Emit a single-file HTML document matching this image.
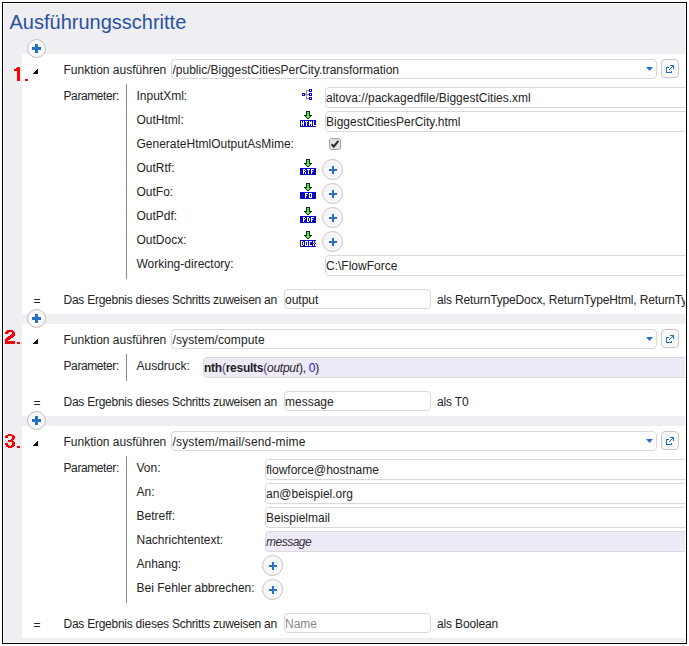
<!DOCTYPE html>
<html><head><meta charset="utf-8"><style>
html,body{margin:0;padding:0;width:689px;height:646px;overflow:hidden;background:#fff;font-family:'Liberation Sans', sans-serif;}
</style></head><body>
<div style="position:relative;width:689px;height:646px;overflow:hidden">
<div style="position:absolute;left:2px;top:2px;width:685px;height:642px;border:1px solid #000;box-sizing:border-box;background:#fff"></div>
<div style="position:absolute;left:4px;top:4px;width:681px;height:638px;background:#efeef3"></div>
<div style="position:absolute;left:0;top:0;width:685px;height:642px;overflow:hidden">
<div style="position:absolute;left:9.5px;top:11px;font-size:20px;line-height:22px;white-space:nowrap;color:#2852a0;letter-spacing:0px">Ausführungsschritte</div>
<div style="position:absolute;left:22px;top:54px;width:663px;height:260px;background:#fff"></div>
<div style="position:absolute;left:22px;top:324px;width:663px;height:92px;background:#fff"></div>
<div style="position:absolute;left:22px;top:426px;width:663px;height:212px;background:#fff"></div>
<svg style="position:absolute;left:27px;top:39px" width="19" height="19" viewBox="0 0 19 19"><circle cx="9.5" cy="9.5" r="9" fill="#f7f7f7" stroke="#c0c0c0" stroke-width="1"/><rect x="5" y="8" width="9" height="3" fill="#2470c3"/><rect x="8" y="5" width="3" height="9" fill="#2470c3"/></svg>
<svg style="position:absolute;left:27px;top:309px" width="19" height="19" viewBox="0 0 19 19"><circle cx="9.5" cy="9.5" r="9" fill="#f7f7f7" stroke="#c0c0c0" stroke-width="1"/><rect x="5" y="8" width="9" height="3" fill="#2470c3"/><rect x="8" y="5" width="3" height="9" fill="#2470c3"/></svg>
<svg style="position:absolute;left:27px;top:411px" width="19" height="19" viewBox="0 0 19 19"><circle cx="9.5" cy="9.5" r="9" fill="#f7f7f7" stroke="#c0c0c0" stroke-width="1"/><rect x="5" y="8" width="9" height="3" fill="#2470c3"/><rect x="8" y="5" width="3" height="9" fill="#2470c3"/></svg>
<svg style="position:absolute;left:33px;top:69px" width="5" height="5" shape-rendering="crispEdges"><rect x="4" y="0" width="1" height="1" fill="#151515"/><rect x="3" y="1" width="2" height="1" fill="#151515"/><rect x="2" y="2" width="3" height="1" fill="#151515"/><rect x="1" y="3" width="4" height="1" fill="#151515"/><rect x="0" y="4" width="5" height="1" fill="#151515"/></svg>
<div style="position:absolute;left:63.5px;top:63px;font-size:12px;line-height:14px;white-space:nowrap;color:#232323">Funktion ausführen</div>
<div style="position:absolute;left:171px;top:59px;width:486px;height:20px;box-sizing:border-box;border:1px solid #d9d9d9;border-radius:4px;background:#fff;font-size:12px;line-height:20px;padding-left:0px;white-space:nowrap;overflow:hidden;color:#232323;letter-spacing:0px;padding-left:0.5px">/public/BiggestCitiesPerCity.transformation</div>
<svg style="position:absolute;left:645px;top:66px" width="9" height="6" viewBox="0 0 9 6"><path d="M1 1 L8 1 L4.5 5 Z" fill="#2470c3"/></svg>
<div style="position:absolute;left:661px;top:59px;width:18px;height:19px;box-sizing:border-box;border:1px solid #c8c8c8;border-radius:4px;background:#f8f8f8"></div>
<svg style="position:absolute;left:666px;top:65px" width="8" height="8" shape-rendering="crispEdges"><rect x="4" y="0" width="4" height="1" fill="#2470c3"/><rect x="6" y="1" width="2" height="1" fill="#2470c3"/><rect x="0" y="2" width="3" height="1" fill="#2470c3"/><rect x="5" y="2" width="1" height="1" fill="#2470c3"/><rect x="7" y="2" width="1" height="1" fill="#2470c3"/><rect x="0" y="3" width="1" height="1" fill="#2470c3"/><rect x="4" y="3" width="1" height="1" fill="#2470c3"/><rect x="7" y="3" width="1" height="1" fill="#2470c3"/><rect x="0" y="4" width="1" height="1" fill="#2470c3"/><rect x="3" y="4" width="1" height="1" fill="#2470c3"/><rect x="0" y="5" width="1" height="1" fill="#2470c3"/><rect x="0" y="6" width="1" height="1" fill="#2470c3"/><rect x="5" y="6" width="1" height="1" fill="#2470c3"/><rect x="0" y="7" width="6" height="1" fill="#2470c3"/></svg>
<svg style="position:absolute;left:13px;top:66px" width="16" height="16" shape-rendering="crispEdges"><rect x="0" y="0" width="6" height="16" fill="#fff" opacity="0"/><rect x="4" y="1" width="3" height="14" fill="#f00"/><rect x="3" y="2" width="1" height="1" fill="#f00"/><rect x="1" y="3" width="3" height="2" fill="#f00"/><rect x="12" y="13" width="3" height="2" fill="#f00"/></svg>
<div style="position:absolute;left:63.5px;top:89px;font-size:12px;line-height:14px;white-space:nowrap;color:#232323;letter-spacing:-0.4px">Parameter:</div>
<div style="position:absolute;left:126px;top:84px;width:1px;height:195px;background:#8a8a8a"></div>
<div style="position:absolute;left:136.5px;top:89px;font-size:12px;line-height:14px;white-space:nowrap;color:#232323">InputXml:</div>
<div style="position:absolute;left:136.5px;top:113px;font-size:12px;line-height:14px;white-space:nowrap;color:#232323">OutHtml:</div>
<div style="position:absolute;left:136.5px;top:137px;font-size:12px;line-height:14px;white-space:nowrap;color:#232323">GenerateHtmlOutputAsMime:</div>
<div style="position:absolute;left:136.5px;top:161px;font-size:12px;line-height:14px;white-space:nowrap;color:#232323">OutRtf:</div>
<div style="position:absolute;left:136.5px;top:185px;font-size:12px;line-height:14px;white-space:nowrap;color:#232323">OutFo:</div>
<div style="position:absolute;left:136.5px;top:209px;font-size:12px;line-height:14px;white-space:nowrap;color:#232323">OutPdf:</div>
<div style="position:absolute;left:136.5px;top:233px;font-size:12px;line-height:14px;white-space:nowrap;color:#232323">OutDocx:</div>
<div style="position:absolute;left:136.5px;top:257px;font-size:12px;line-height:14px;white-space:nowrap;color:#232323">Working-directory:</div>
<svg style="position:absolute;left:302px;top:89px" width="10" height="11" shape-rendering="crispEdges"><rect x="0" y="4" width="3" height="3" fill="#0000f0"/><rect x="1" y="5" width="1" height="1" fill="#fff"/><rect x="7" y="0" width="3" height="3" fill="#0000f0"/><rect x="8" y="1" width="1" height="1" fill="#fff"/><rect x="7" y="4" width="3" height="3" fill="#0000f0"/><rect x="8" y="5" width="1" height="1" fill="#fff"/><rect x="7" y="8" width="3" height="3" fill="#0000f0"/><rect x="8" y="9" width="1" height="1" fill="#fff"/><rect x="4" y="1" width="1" height="9" fill="#8c8c8c"/><rect x="5" y="1" width="2" height="1" fill="#8c8c8c"/><rect x="5" y="9" width="2" height="1" fill="#8c8c8c"/><rect x="3" y="5" width="4" height="1" fill="#8c8c8c"/></svg>
<div style="position:absolute;left:325px;top:87px;width:500px;height:21px;box-sizing:border-box;border:1px solid #d9d9d9;border-radius:4px;background:#fff;font-size:12px;line-height:20px;padding-left:0px;white-space:nowrap;overflow:hidden;color:#232323;">altova://packagedfile/BiggestCities.xml</div>
<svg style="position:absolute;left:300px;top:111px" width="16" height="16" shape-rendering="crispEdges"><rect x="6" y="0" width="1" height="1" fill="#202020"/><rect x="7" y="0" width="1" height="1" fill="#202020"/><rect x="8" y="0" width="1" height="1" fill="#202020"/><rect x="9" y="0" width="1" height="1" fill="#202020"/><rect x="6" y="1" width="1" height="1" fill="#202020"/><rect x="7" y="1" width="1" height="1" fill="#4cf04c"/><rect x="8" y="1" width="1" height="1" fill="#4cf04c"/><rect x="9" y="1" width="1" height="1" fill="#202020"/><rect x="6" y="2" width="1" height="1" fill="#202020"/><rect x="7" y="2" width="1" height="1" fill="#4cf04c"/><rect x="8" y="2" width="1" height="1" fill="#4cf04c"/><rect x="9" y="2" width="1" height="1" fill="#202020"/><rect x="6" y="3" width="1" height="1" fill="#202020"/><rect x="7" y="3" width="1" height="1" fill="#4cf04c"/><rect x="8" y="3" width="1" height="1" fill="#4cf04c"/><rect x="9" y="3" width="1" height="1" fill="#202020"/><rect x="4" y="4" width="1" height="1" fill="#202020"/><rect x="5" y="4" width="1" height="1" fill="#202020"/><rect x="6" y="4" width="1" height="1" fill="#202020"/><rect x="7" y="4" width="1" height="1" fill="#4cf04c"/><rect x="8" y="4" width="1" height="1" fill="#4cf04c"/><rect x="9" y="4" width="1" height="1" fill="#202020"/><rect x="10" y="4" width="1" height="1" fill="#202020"/><rect x="11" y="4" width="1" height="1" fill="#202020"/><rect x="5" y="5" width="1" height="1" fill="#202020"/><rect x="6" y="5" width="1" height="1" fill="#4cf04c"/><rect x="7" y="5" width="1" height="1" fill="#4cf04c"/><rect x="8" y="5" width="1" height="1" fill="#4cf04c"/><rect x="9" y="5" width="1" height="1" fill="#4cf04c"/><rect x="10" y="5" width="1" height="1" fill="#202020"/><rect x="6" y="6" width="1" height="1" fill="#202020"/><rect x="7" y="6" width="1" height="1" fill="#4cf04c"/><rect x="8" y="6" width="1" height="1" fill="#4cf04c"/><rect x="9" y="6" width="1" height="1" fill="#202020"/><rect x="7" y="7" width="1" height="1" fill="#202020"/><rect x="8" y="7" width="1" height="1" fill="#202020"/><rect x="0" y="9" width="16" height="7" fill="#0a0ac4"/><rect x="1" y="10" width="1" height="1" fill="#fff"/><rect x="3" y="10" width="1" height="1" fill="#fff"/><rect x="1" y="11" width="1" height="1" fill="#fff"/><rect x="3" y="11" width="1" height="1" fill="#fff"/><rect x="1" y="12" width="1" height="1" fill="#fff"/><rect x="2" y="12" width="1" height="1" fill="#fff"/><rect x="3" y="12" width="1" height="1" fill="#fff"/><rect x="1" y="13" width="1" height="1" fill="#fff"/><rect x="3" y="13" width="1" height="1" fill="#fff"/><rect x="1" y="14" width="1" height="1" fill="#fff"/><rect x="3" y="14" width="1" height="1" fill="#fff"/><rect x="5" y="10" width="1" height="1" fill="#fff"/><rect x="6" y="10" width="1" height="1" fill="#fff"/><rect x="7" y="10" width="1" height="1" fill="#fff"/><rect x="6" y="11" width="1" height="1" fill="#fff"/><rect x="6" y="12" width="1" height="1" fill="#fff"/><rect x="6" y="13" width="1" height="1" fill="#fff"/><rect x="6" y="14" width="1" height="1" fill="#fff"/><rect x="9" y="10" width="1" height="1" fill="#fff"/><rect x="11" y="10" width="1" height="1" fill="#fff"/><rect x="9" y="11" width="1" height="1" fill="#fff"/><rect x="10" y="11" width="1" height="1" fill="#fff"/><rect x="11" y="11" width="1" height="1" fill="#fff"/><rect x="9" y="12" width="1" height="1" fill="#fff"/><rect x="10" y="12" width="1" height="1" fill="#fff"/><rect x="11" y="12" width="1" height="1" fill="#fff"/><rect x="9" y="13" width="1" height="1" fill="#fff"/><rect x="11" y="13" width="1" height="1" fill="#fff"/><rect x="9" y="14" width="1" height="1" fill="#fff"/><rect x="11" y="14" width="1" height="1" fill="#fff"/><rect x="13" y="10" width="1" height="1" fill="#fff"/><rect x="13" y="11" width="1" height="1" fill="#fff"/><rect x="13" y="12" width="1" height="1" fill="#fff"/><rect x="13" y="13" width="1" height="1" fill="#fff"/><rect x="13" y="14" width="1" height="1" fill="#fff"/><rect x="14" y="14" width="1" height="1" fill="#fff"/><rect x="15" y="14" width="1" height="1" fill="#fff"/></svg>
<div style="position:absolute;left:325px;top:111px;width:500px;height:21px;box-sizing:border-box;border:1px solid #d9d9d9;border-radius:4px;background:#fff;font-size:12px;line-height:20px;padding-left:0px;white-space:nowrap;overflow:hidden;color:#232323;">BiggestCitiesPerCity.html</div>
<svg style="position:absolute;left:329px;top:138px" width="12" height="12" viewBox="0 0 12 12"><rect x="0.5" y="0.5" width="11" height="11" rx="2" fill="#e3e3e3" stroke="#a0a0a0"/><path d="M2.6 6.2 L4.7 8.6 L9.4 2.8" fill="none" stroke="#2a2a2a" stroke-width="2"/></svg>
<svg style="position:absolute;left:300px;top:159px" width="16" height="16" shape-rendering="crispEdges"><rect x="6" y="0" width="1" height="1" fill="#202020"/><rect x="7" y="0" width="1" height="1" fill="#202020"/><rect x="8" y="0" width="1" height="1" fill="#202020"/><rect x="9" y="0" width="1" height="1" fill="#202020"/><rect x="6" y="1" width="1" height="1" fill="#202020"/><rect x="7" y="1" width="1" height="1" fill="#4cf04c"/><rect x="8" y="1" width="1" height="1" fill="#4cf04c"/><rect x="9" y="1" width="1" height="1" fill="#202020"/><rect x="6" y="2" width="1" height="1" fill="#202020"/><rect x="7" y="2" width="1" height="1" fill="#4cf04c"/><rect x="8" y="2" width="1" height="1" fill="#4cf04c"/><rect x="9" y="2" width="1" height="1" fill="#202020"/><rect x="6" y="3" width="1" height="1" fill="#202020"/><rect x="7" y="3" width="1" height="1" fill="#4cf04c"/><rect x="8" y="3" width="1" height="1" fill="#4cf04c"/><rect x="9" y="3" width="1" height="1" fill="#202020"/><rect x="4" y="4" width="1" height="1" fill="#202020"/><rect x="5" y="4" width="1" height="1" fill="#202020"/><rect x="6" y="4" width="1" height="1" fill="#202020"/><rect x="7" y="4" width="1" height="1" fill="#4cf04c"/><rect x="8" y="4" width="1" height="1" fill="#4cf04c"/><rect x="9" y="4" width="1" height="1" fill="#202020"/><rect x="10" y="4" width="1" height="1" fill="#202020"/><rect x="11" y="4" width="1" height="1" fill="#202020"/><rect x="5" y="5" width="1" height="1" fill="#202020"/><rect x="6" y="5" width="1" height="1" fill="#4cf04c"/><rect x="7" y="5" width="1" height="1" fill="#4cf04c"/><rect x="8" y="5" width="1" height="1" fill="#4cf04c"/><rect x="9" y="5" width="1" height="1" fill="#4cf04c"/><rect x="10" y="5" width="1" height="1" fill="#202020"/><rect x="6" y="6" width="1" height="1" fill="#202020"/><rect x="7" y="6" width="1" height="1" fill="#4cf04c"/><rect x="8" y="6" width="1" height="1" fill="#4cf04c"/><rect x="9" y="6" width="1" height="1" fill="#202020"/><rect x="7" y="7" width="1" height="1" fill="#202020"/><rect x="8" y="7" width="1" height="1" fill="#202020"/><rect x="0" y="9" width="16" height="7" fill="#0a0ac4"/><rect x="3" y="10" width="1" height="1" fill="#fff"/><rect x="4" y="10" width="1" height="1" fill="#fff"/><rect x="3" y="11" width="1" height="1" fill="#fff"/><rect x="5" y="11" width="1" height="1" fill="#fff"/><rect x="3" y="12" width="1" height="1" fill="#fff"/><rect x="4" y="12" width="1" height="1" fill="#fff"/><rect x="3" y="13" width="1" height="1" fill="#fff"/><rect x="5" y="13" width="1" height="1" fill="#fff"/><rect x="3" y="14" width="1" height="1" fill="#fff"/><rect x="5" y="14" width="1" height="1" fill="#fff"/><rect x="7" y="10" width="1" height="1" fill="#fff"/><rect x="8" y="10" width="1" height="1" fill="#fff"/><rect x="9" y="10" width="1" height="1" fill="#fff"/><rect x="8" y="11" width="1" height="1" fill="#fff"/><rect x="8" y="12" width="1" height="1" fill="#fff"/><rect x="8" y="13" width="1" height="1" fill="#fff"/><rect x="8" y="14" width="1" height="1" fill="#fff"/><rect x="11" y="10" width="1" height="1" fill="#fff"/><rect x="12" y="10" width="1" height="1" fill="#fff"/><rect x="13" y="10" width="1" height="1" fill="#fff"/><rect x="11" y="11" width="1" height="1" fill="#fff"/><rect x="11" y="12" width="1" height="1" fill="#fff"/><rect x="12" y="12" width="1" height="1" fill="#fff"/><rect x="11" y="13" width="1" height="1" fill="#fff"/><rect x="11" y="14" width="1" height="1" fill="#fff"/></svg>
<svg style="position:absolute;left:322px;top:159px" width="22" height="22" viewBox="0 0 22 22"><circle cx="10.6" cy="10.5" r="10" fill="#f7f7f7" stroke="#c4c4c4" stroke-width="1"/><rect x="7" y="10" width="8" height="2" fill="#2470c3"/><rect x="10" y="7" width="2" height="8" fill="#2470c3"/></svg>
<svg style="position:absolute;left:300px;top:183px" width="16" height="16" shape-rendering="crispEdges"><rect x="6" y="0" width="1" height="1" fill="#202020"/><rect x="7" y="0" width="1" height="1" fill="#202020"/><rect x="8" y="0" width="1" height="1" fill="#202020"/><rect x="9" y="0" width="1" height="1" fill="#202020"/><rect x="6" y="1" width="1" height="1" fill="#202020"/><rect x="7" y="1" width="1" height="1" fill="#4cf04c"/><rect x="8" y="1" width="1" height="1" fill="#4cf04c"/><rect x="9" y="1" width="1" height="1" fill="#202020"/><rect x="6" y="2" width="1" height="1" fill="#202020"/><rect x="7" y="2" width="1" height="1" fill="#4cf04c"/><rect x="8" y="2" width="1" height="1" fill="#4cf04c"/><rect x="9" y="2" width="1" height="1" fill="#202020"/><rect x="6" y="3" width="1" height="1" fill="#202020"/><rect x="7" y="3" width="1" height="1" fill="#4cf04c"/><rect x="8" y="3" width="1" height="1" fill="#4cf04c"/><rect x="9" y="3" width="1" height="1" fill="#202020"/><rect x="4" y="4" width="1" height="1" fill="#202020"/><rect x="5" y="4" width="1" height="1" fill="#202020"/><rect x="6" y="4" width="1" height="1" fill="#202020"/><rect x="7" y="4" width="1" height="1" fill="#4cf04c"/><rect x="8" y="4" width="1" height="1" fill="#4cf04c"/><rect x="9" y="4" width="1" height="1" fill="#202020"/><rect x="10" y="4" width="1" height="1" fill="#202020"/><rect x="11" y="4" width="1" height="1" fill="#202020"/><rect x="5" y="5" width="1" height="1" fill="#202020"/><rect x="6" y="5" width="1" height="1" fill="#4cf04c"/><rect x="7" y="5" width="1" height="1" fill="#4cf04c"/><rect x="8" y="5" width="1" height="1" fill="#4cf04c"/><rect x="9" y="5" width="1" height="1" fill="#4cf04c"/><rect x="10" y="5" width="1" height="1" fill="#202020"/><rect x="6" y="6" width="1" height="1" fill="#202020"/><rect x="7" y="6" width="1" height="1" fill="#4cf04c"/><rect x="8" y="6" width="1" height="1" fill="#4cf04c"/><rect x="9" y="6" width="1" height="1" fill="#202020"/><rect x="7" y="7" width="1" height="1" fill="#202020"/><rect x="8" y="7" width="1" height="1" fill="#202020"/><rect x="0" y="9" width="16" height="7" fill="#0a0ac4"/><rect x="5" y="10" width="1" height="1" fill="#fff"/><rect x="6" y="10" width="1" height="1" fill="#fff"/><rect x="7" y="10" width="1" height="1" fill="#fff"/><rect x="5" y="11" width="1" height="1" fill="#fff"/><rect x="5" y="12" width="1" height="1" fill="#fff"/><rect x="6" y="12" width="1" height="1" fill="#fff"/><rect x="5" y="13" width="1" height="1" fill="#fff"/><rect x="5" y="14" width="1" height="1" fill="#fff"/><rect x="9" y="10" width="1" height="1" fill="#fff"/><rect x="10" y="10" width="1" height="1" fill="#fff"/><rect x="11" y="10" width="1" height="1" fill="#fff"/><rect x="9" y="11" width="1" height="1" fill="#fff"/><rect x="11" y="11" width="1" height="1" fill="#fff"/><rect x="9" y="12" width="1" height="1" fill="#fff"/><rect x="11" y="12" width="1" height="1" fill="#fff"/><rect x="9" y="13" width="1" height="1" fill="#fff"/><rect x="11" y="13" width="1" height="1" fill="#fff"/><rect x="9" y="14" width="1" height="1" fill="#fff"/><rect x="10" y="14" width="1" height="1" fill="#fff"/><rect x="11" y="14" width="1" height="1" fill="#fff"/></svg>
<svg style="position:absolute;left:322px;top:183px" width="22" height="22" viewBox="0 0 22 22"><circle cx="10.6" cy="10.5" r="10" fill="#f7f7f7" stroke="#c4c4c4" stroke-width="1"/><rect x="7" y="10" width="8" height="2" fill="#2470c3"/><rect x="10" y="7" width="2" height="8" fill="#2470c3"/></svg>
<svg style="position:absolute;left:300px;top:207px" width="16" height="16" shape-rendering="crispEdges"><rect x="6" y="0" width="1" height="1" fill="#202020"/><rect x="7" y="0" width="1" height="1" fill="#202020"/><rect x="8" y="0" width="1" height="1" fill="#202020"/><rect x="9" y="0" width="1" height="1" fill="#202020"/><rect x="6" y="1" width="1" height="1" fill="#202020"/><rect x="7" y="1" width="1" height="1" fill="#4cf04c"/><rect x="8" y="1" width="1" height="1" fill="#4cf04c"/><rect x="9" y="1" width="1" height="1" fill="#202020"/><rect x="6" y="2" width="1" height="1" fill="#202020"/><rect x="7" y="2" width="1" height="1" fill="#4cf04c"/><rect x="8" y="2" width="1" height="1" fill="#4cf04c"/><rect x="9" y="2" width="1" height="1" fill="#202020"/><rect x="6" y="3" width="1" height="1" fill="#202020"/><rect x="7" y="3" width="1" height="1" fill="#4cf04c"/><rect x="8" y="3" width="1" height="1" fill="#4cf04c"/><rect x="9" y="3" width="1" height="1" fill="#202020"/><rect x="4" y="4" width="1" height="1" fill="#202020"/><rect x="5" y="4" width="1" height="1" fill="#202020"/><rect x="6" y="4" width="1" height="1" fill="#202020"/><rect x="7" y="4" width="1" height="1" fill="#4cf04c"/><rect x="8" y="4" width="1" height="1" fill="#4cf04c"/><rect x="9" y="4" width="1" height="1" fill="#202020"/><rect x="10" y="4" width="1" height="1" fill="#202020"/><rect x="11" y="4" width="1" height="1" fill="#202020"/><rect x="5" y="5" width="1" height="1" fill="#202020"/><rect x="6" y="5" width="1" height="1" fill="#4cf04c"/><rect x="7" y="5" width="1" height="1" fill="#4cf04c"/><rect x="8" y="5" width="1" height="1" fill="#4cf04c"/><rect x="9" y="5" width="1" height="1" fill="#4cf04c"/><rect x="10" y="5" width="1" height="1" fill="#202020"/><rect x="6" y="6" width="1" height="1" fill="#202020"/><rect x="7" y="6" width="1" height="1" fill="#4cf04c"/><rect x="8" y="6" width="1" height="1" fill="#4cf04c"/><rect x="9" y="6" width="1" height="1" fill="#202020"/><rect x="7" y="7" width="1" height="1" fill="#202020"/><rect x="8" y="7" width="1" height="1" fill="#202020"/><rect x="0" y="9" width="16" height="7" fill="#0a0ac4"/><rect x="3" y="10" width="1" height="1" fill="#fff"/><rect x="4" y="10" width="1" height="1" fill="#fff"/><rect x="3" y="11" width="1" height="1" fill="#fff"/><rect x="5" y="11" width="1" height="1" fill="#fff"/><rect x="3" y="12" width="1" height="1" fill="#fff"/><rect x="4" y="12" width="1" height="1" fill="#fff"/><rect x="3" y="13" width="1" height="1" fill="#fff"/><rect x="3" y="14" width="1" height="1" fill="#fff"/><rect x="7" y="10" width="1" height="1" fill="#fff"/><rect x="8" y="10" width="1" height="1" fill="#fff"/><rect x="7" y="11" width="1" height="1" fill="#fff"/><rect x="9" y="11" width="1" height="1" fill="#fff"/><rect x="7" y="12" width="1" height="1" fill="#fff"/><rect x="9" y="12" width="1" height="1" fill="#fff"/><rect x="7" y="13" width="1" height="1" fill="#fff"/><rect x="9" y="13" width="1" height="1" fill="#fff"/><rect x="7" y="14" width="1" height="1" fill="#fff"/><rect x="8" y="14" width="1" height="1" fill="#fff"/><rect x="11" y="10" width="1" height="1" fill="#fff"/><rect x="12" y="10" width="1" height="1" fill="#fff"/><rect x="13" y="10" width="1" height="1" fill="#fff"/><rect x="11" y="11" width="1" height="1" fill="#fff"/><rect x="11" y="12" width="1" height="1" fill="#fff"/><rect x="12" y="12" width="1" height="1" fill="#fff"/><rect x="11" y="13" width="1" height="1" fill="#fff"/><rect x="11" y="14" width="1" height="1" fill="#fff"/></svg>
<svg style="position:absolute;left:322px;top:207px" width="22" height="22" viewBox="0 0 22 22"><circle cx="10.6" cy="10.5" r="10" fill="#f7f7f7" stroke="#c4c4c4" stroke-width="1"/><rect x="7" y="10" width="8" height="2" fill="#2470c3"/><rect x="10" y="7" width="2" height="8" fill="#2470c3"/></svg>
<svg style="position:absolute;left:300px;top:231px" width="16" height="16" shape-rendering="crispEdges"><rect x="6" y="0" width="1" height="1" fill="#202020"/><rect x="7" y="0" width="1" height="1" fill="#202020"/><rect x="8" y="0" width="1" height="1" fill="#202020"/><rect x="9" y="0" width="1" height="1" fill="#202020"/><rect x="6" y="1" width="1" height="1" fill="#202020"/><rect x="7" y="1" width="1" height="1" fill="#4cf04c"/><rect x="8" y="1" width="1" height="1" fill="#4cf04c"/><rect x="9" y="1" width="1" height="1" fill="#202020"/><rect x="6" y="2" width="1" height="1" fill="#202020"/><rect x="7" y="2" width="1" height="1" fill="#4cf04c"/><rect x="8" y="2" width="1" height="1" fill="#4cf04c"/><rect x="9" y="2" width="1" height="1" fill="#202020"/><rect x="6" y="3" width="1" height="1" fill="#202020"/><rect x="7" y="3" width="1" height="1" fill="#4cf04c"/><rect x="8" y="3" width="1" height="1" fill="#4cf04c"/><rect x="9" y="3" width="1" height="1" fill="#202020"/><rect x="4" y="4" width="1" height="1" fill="#202020"/><rect x="5" y="4" width="1" height="1" fill="#202020"/><rect x="6" y="4" width="1" height="1" fill="#202020"/><rect x="7" y="4" width="1" height="1" fill="#4cf04c"/><rect x="8" y="4" width="1" height="1" fill="#4cf04c"/><rect x="9" y="4" width="1" height="1" fill="#202020"/><rect x="10" y="4" width="1" height="1" fill="#202020"/><rect x="11" y="4" width="1" height="1" fill="#202020"/><rect x="5" y="5" width="1" height="1" fill="#202020"/><rect x="6" y="5" width="1" height="1" fill="#4cf04c"/><rect x="7" y="5" width="1" height="1" fill="#4cf04c"/><rect x="8" y="5" width="1" height="1" fill="#4cf04c"/><rect x="9" y="5" width="1" height="1" fill="#4cf04c"/><rect x="10" y="5" width="1" height="1" fill="#202020"/><rect x="6" y="6" width="1" height="1" fill="#202020"/><rect x="7" y="6" width="1" height="1" fill="#4cf04c"/><rect x="8" y="6" width="1" height="1" fill="#4cf04c"/><rect x="9" y="6" width="1" height="1" fill="#202020"/><rect x="7" y="7" width="1" height="1" fill="#202020"/><rect x="8" y="7" width="1" height="1" fill="#202020"/><rect x="0" y="9" width="16" height="7" fill="#0a0ac4"/><rect x="1" y="10" width="1" height="1" fill="#fff"/><rect x="2" y="10" width="1" height="1" fill="#fff"/><rect x="1" y="11" width="1" height="1" fill="#fff"/><rect x="3" y="11" width="1" height="1" fill="#fff"/><rect x="1" y="12" width="1" height="1" fill="#fff"/><rect x="3" y="12" width="1" height="1" fill="#fff"/><rect x="1" y="13" width="1" height="1" fill="#fff"/><rect x="3" y="13" width="1" height="1" fill="#fff"/><rect x="1" y="14" width="1" height="1" fill="#fff"/><rect x="2" y="14" width="1" height="1" fill="#fff"/><rect x="5" y="10" width="1" height="1" fill="#fff"/><rect x="6" y="10" width="1" height="1" fill="#fff"/><rect x="7" y="10" width="1" height="1" fill="#fff"/><rect x="5" y="11" width="1" height="1" fill="#fff"/><rect x="7" y="11" width="1" height="1" fill="#fff"/><rect x="5" y="12" width="1" height="1" fill="#fff"/><rect x="7" y="12" width="1" height="1" fill="#fff"/><rect x="5" y="13" width="1" height="1" fill="#fff"/><rect x="7" y="13" width="1" height="1" fill="#fff"/><rect x="5" y="14" width="1" height="1" fill="#fff"/><rect x="6" y="14" width="1" height="1" fill="#fff"/><rect x="7" y="14" width="1" height="1" fill="#fff"/><rect x="9" y="10" width="1" height="1" fill="#fff"/><rect x="10" y="10" width="1" height="1" fill="#fff"/><rect x="11" y="10" width="1" height="1" fill="#fff"/><rect x="9" y="11" width="1" height="1" fill="#fff"/><rect x="9" y="12" width="1" height="1" fill="#fff"/><rect x="9" y="13" width="1" height="1" fill="#fff"/><rect x="9" y="14" width="1" height="1" fill="#fff"/><rect x="10" y="14" width="1" height="1" fill="#fff"/><rect x="11" y="14" width="1" height="1" fill="#fff"/><rect x="13" y="10" width="1" height="1" fill="#fff"/><rect x="15" y="10" width="1" height="1" fill="#fff"/><rect x="13" y="11" width="1" height="1" fill="#fff"/><rect x="15" y="11" width="1" height="1" fill="#fff"/><rect x="14" y="12" width="1" height="1" fill="#fff"/><rect x="13" y="13" width="1" height="1" fill="#fff"/><rect x="15" y="13" width="1" height="1" fill="#fff"/><rect x="13" y="14" width="1" height="1" fill="#fff"/><rect x="15" y="14" width="1" height="1" fill="#fff"/></svg>
<svg style="position:absolute;left:322px;top:231px" width="22" height="22" viewBox="0 0 22 22"><circle cx="10.6" cy="10.5" r="10" fill="#f7f7f7" stroke="#c4c4c4" stroke-width="1"/><rect x="7" y="10" width="8" height="2" fill="#2470c3"/><rect x="10" y="7" width="2" height="8" fill="#2470c3"/></svg>
<div style="position:absolute;left:325px;top:255px;width:500px;height:21px;box-sizing:border-box;border:1px solid #d9d9d9;border-radius:4px;background:#fff;font-size:12px;line-height:20px;padding-left:0px;white-space:nowrap;overflow:hidden;color:#232323;">C:\FlowForce</div>
<div style="position:absolute;left:33.5px;top:294px;font-size:12px;line-height:14px;white-space:nowrap;color:#232323">=</div>
<div style="position:absolute;left:63.5px;top:293px;font-size:12px;line-height:14px;white-space:nowrap;color:#232323;letter-spacing:-0.25px">Das Ergebnis dieses Schritts zuweisen an</div>
<div style="position:absolute;left:284px;top:289px;width:147px;height:20px;box-sizing:border-box;border:1px solid #d9d9d9;border-radius:4px;background:#fff;font-size:12px;line-height:20px;padding-left:0px;white-space:nowrap;overflow:hidden;color:#232323;">output</div>
<div style="position:absolute;left:437px;top:293px;font-size:12px;line-height:14px;white-space:nowrap;color:#232323;letter-spacing:-0.15px">als ReturnTypeDocx, ReturnTypeHtml, ReturnTypeRtf</div>
<svg style="position:absolute;left:33px;top:339px" width="5" height="5" shape-rendering="crispEdges"><rect x="4" y="0" width="1" height="1" fill="#151515"/><rect x="3" y="1" width="2" height="1" fill="#151515"/><rect x="2" y="2" width="3" height="1" fill="#151515"/><rect x="1" y="3" width="4" height="1" fill="#151515"/><rect x="0" y="4" width="5" height="1" fill="#151515"/></svg>
<div style="position:absolute;left:63.5px;top:333px;font-size:12px;line-height:14px;white-space:nowrap;color:#232323">Funktion ausführen</div>
<div style="position:absolute;left:171px;top:329px;width:486px;height:20px;box-sizing:border-box;border:1px solid #d9d9d9;border-radius:4px;background:#fff;font-size:12px;line-height:20px;padding-left:0px;white-space:nowrap;overflow:hidden;color:#232323;letter-spacing:0.1px;padding-left:0.5px">/system/compute</div>
<svg style="position:absolute;left:645px;top:336px" width="9" height="6" viewBox="0 0 9 6"><path d="M1 1 L8 1 L4.5 5 Z" fill="#2470c3"/></svg>
<div style="position:absolute;left:661px;top:329px;width:18px;height:19px;box-sizing:border-box;border:1px solid #c8c8c8;border-radius:4px;background:#f8f8f8"></div>
<svg style="position:absolute;left:666px;top:335px" width="8" height="8" shape-rendering="crispEdges"><rect x="4" y="0" width="4" height="1" fill="#2470c3"/><rect x="6" y="1" width="2" height="1" fill="#2470c3"/><rect x="0" y="2" width="3" height="1" fill="#2470c3"/><rect x="5" y="2" width="1" height="1" fill="#2470c3"/><rect x="7" y="2" width="1" height="1" fill="#2470c3"/><rect x="0" y="3" width="1" height="1" fill="#2470c3"/><rect x="4" y="3" width="1" height="1" fill="#2470c3"/><rect x="7" y="3" width="1" height="1" fill="#2470c3"/><rect x="0" y="4" width="1" height="1" fill="#2470c3"/><rect x="3" y="4" width="1" height="1" fill="#2470c3"/><rect x="0" y="5" width="1" height="1" fill="#2470c3"/><rect x="0" y="6" width="1" height="1" fill="#2470c3"/><rect x="5" y="6" width="1" height="1" fill="#2470c3"/><rect x="0" y="7" width="6" height="1" fill="#2470c3"/></svg>
<svg style="position:absolute;left:5px;top:330px" width="15" height="14" shape-rendering="crispEdges"><rect x="2" y="0" width="6" height="1" fill="#f00"/><rect x="1" y="1" width="8" height="1" fill="#f00"/><rect x="0" y="2" width="4" height="1" fill="#f00"/><rect x="7" y="2" width="3" height="1" fill="#f00"/><rect x="0" y="3" width="3" height="1" fill="#f00"/><rect x="7" y="3" width="3" height="1" fill="#f00"/><rect x="6" y="4" width="4" height="1" fill="#f00"/><rect x="5" y="5" width="5" height="1" fill="#f00"/><rect x="3" y="6" width="6" height="1" fill="#f00"/><rect x="2" y="7" width="6" height="1" fill="#f00"/><rect x="1" y="8" width="5" height="1" fill="#f00"/><rect x="0" y="9" width="5" height="1" fill="#f00"/><rect x="0" y="10" width="3" height="1" fill="#f00"/><rect x="0" y="11" width="10" height="1" fill="#f00"/><rect x="0" y="12" width="10" height="1" fill="#f00"/><rect x="12" y="12" width="3" height="1" fill="#f00"/><rect x="0" y="13" width="10" height="1" fill="#f00"/><rect x="12" y="13" width="3" height="1" fill="#f00"/></svg>
<div style="position:absolute;left:63.5px;top:359px;font-size:12px;line-height:14px;white-space:nowrap;color:#232323;letter-spacing:-0.4px">Parameter:</div>
<div style="position:absolute;left:126px;top:354px;width:1px;height:27px;background:#8a8a8a"></div>
<div style="position:absolute;left:136.5px;top:359px;font-size:12px;line-height:14px;white-space:nowrap;color:#232323">Ausdruck:</div>
<div style="position:absolute;left:203px;top:357px;width:560px;height:21px;box-sizing:border-box;border:1px solid #d9d9d9;border-radius:4px;background:#efeaf8;font-size:12px;line-height:20px;padding-left:0px;white-space:nowrap;overflow:hidden;color:#232323;padding-left:0px;letter-spacing:-0.25px"><b>nth</b><span style="color:#50407a">(</span><b>results</b><span style="color:#50407a">(</span><i>output</i>), <span style="color:#2a10f0">0</span>)</div>
<div style="position:absolute;left:33.5px;top:396px;font-size:12px;line-height:14px;white-space:nowrap;color:#232323">=</div>
<div style="position:absolute;left:63.5px;top:395px;font-size:12px;line-height:14px;white-space:nowrap;color:#232323;letter-spacing:-0.25px">Das Ergebnis dieses Schritts zuweisen an</div>
<div style="position:absolute;left:284px;top:391px;width:147px;height:20px;box-sizing:border-box;border:1px solid #d9d9d9;border-radius:4px;background:#fff;font-size:12px;line-height:20px;padding-left:0px;white-space:nowrap;overflow:hidden;color:#232323;">message</div>
<div style="position:absolute;left:437px;top:395px;font-size:12px;line-height:14px;white-space:nowrap;color:#232323;letter-spacing:-0.15px">als T0</div>
<svg style="position:absolute;left:33px;top:441px" width="5" height="5" shape-rendering="crispEdges"><rect x="4" y="0" width="1" height="1" fill="#151515"/><rect x="3" y="1" width="2" height="1" fill="#151515"/><rect x="2" y="2" width="3" height="1" fill="#151515"/><rect x="1" y="3" width="4" height="1" fill="#151515"/><rect x="0" y="4" width="5" height="1" fill="#151515"/></svg>
<div style="position:absolute;left:63.5px;top:435px;font-size:12px;line-height:14px;white-space:nowrap;color:#232323">Funktion ausführen</div>
<div style="position:absolute;left:171px;top:431px;width:486px;height:20px;box-sizing:border-box;border:1px solid #d9d9d9;border-radius:4px;background:#fff;font-size:12px;line-height:20px;padding-left:0px;white-space:nowrap;overflow:hidden;color:#232323;letter-spacing:0.17px;padding-left:0.5px">/system/mail/send-mime</div>
<svg style="position:absolute;left:645px;top:438px" width="9" height="6" viewBox="0 0 9 6"><path d="M1 1 L8 1 L4.5 5 Z" fill="#2470c3"/></svg>
<div style="position:absolute;left:661px;top:431px;width:18px;height:19px;box-sizing:border-box;border:1px solid #c8c8c8;border-radius:4px;background:#f8f8f8"></div>
<svg style="position:absolute;left:666px;top:437px" width="8" height="8" shape-rendering="crispEdges"><rect x="4" y="0" width="4" height="1" fill="#2470c3"/><rect x="6" y="1" width="2" height="1" fill="#2470c3"/><rect x="0" y="2" width="3" height="1" fill="#2470c3"/><rect x="5" y="2" width="1" height="1" fill="#2470c3"/><rect x="7" y="2" width="1" height="1" fill="#2470c3"/><rect x="0" y="3" width="1" height="1" fill="#2470c3"/><rect x="4" y="3" width="1" height="1" fill="#2470c3"/><rect x="7" y="3" width="1" height="1" fill="#2470c3"/><rect x="0" y="4" width="1" height="1" fill="#2470c3"/><rect x="3" y="4" width="1" height="1" fill="#2470c3"/><rect x="0" y="5" width="1" height="1" fill="#2470c3"/><rect x="0" y="6" width="1" height="1" fill="#2470c3"/><rect x="5" y="6" width="1" height="1" fill="#2470c3"/><rect x="0" y="7" width="6" height="1" fill="#2470c3"/></svg>
<svg style="position:absolute;left:5px;top:434px" width="15" height="14" shape-rendering="crispEdges"><rect x="3" y="0" width="4" height="1" fill="#f00"/><rect x="1" y="1" width="8" height="1" fill="#f00"/><rect x="0" y="2" width="3" height="1" fill="#f00"/><rect x="7" y="2" width="3" height="1" fill="#f00"/><rect x="0" y="3" width="3" height="1" fill="#f00"/><rect x="7" y="3" width="3" height="1" fill="#f00"/><rect x="7" y="4" width="3" height="1" fill="#f00"/><rect x="6" y="5" width="3" height="1" fill="#f00"/><rect x="3" y="6" width="5" height="1" fill="#f00"/><rect x="3" y="7" width="6" height="1" fill="#f00"/><rect x="7" y="8" width="3" height="1" fill="#f00"/><rect x="0" y="9" width="3" height="1" fill="#f00"/><rect x="7" y="9" width="3" height="1" fill="#f00"/><rect x="0" y="10" width="3" height="1" fill="#f00"/><rect x="7" y="10" width="3" height="1" fill="#f00"/><rect x="1" y="11" width="3" height="1" fill="#f00"/><rect x="6" y="11" width="4" height="1" fill="#f00"/><rect x="1" y="12" width="8" height="1" fill="#f00"/><rect x="12" y="12" width="3" height="1" fill="#f00"/><rect x="3" y="13" width="4" height="1" fill="#f00"/><rect x="12" y="13" width="3" height="1" fill="#f00"/></svg>
<div style="position:absolute;left:63.5px;top:461px;font-size:12px;line-height:14px;white-space:nowrap;color:#232323;letter-spacing:-0.4px">Parameter:</div>
<div style="position:absolute;left:126px;top:456px;width:1px;height:147px;background:#8a8a8a"></div>
<div style="position:absolute;left:136.5px;top:461px;font-size:12px;line-height:14px;white-space:nowrap;color:#232323">Von:</div>
<div style="position:absolute;left:136.5px;top:485px;font-size:12px;line-height:14px;white-space:nowrap;color:#232323">An:</div>
<div style="position:absolute;left:136.5px;top:509px;font-size:12px;line-height:14px;white-space:nowrap;color:#232323">Betreff:</div>
<div style="position:absolute;left:136.5px;top:533px;font-size:12px;line-height:14px;white-space:nowrap;color:#232323">Nachrichtentext:</div>
<div style="position:absolute;left:136.5px;top:557px;font-size:12px;line-height:14px;white-space:nowrap;color:#232323">Anhang:</div>
<div style="position:absolute;left:136.5px;top:581px;font-size:12px;line-height:14px;white-space:nowrap;color:#232323">Bei Fehler abbrechen:</div>
<div style="position:absolute;left:265px;top:459px;width:500px;height:21px;box-sizing:border-box;border:1px solid #d9d9d9;border-radius:4px;background:#fff;font-size:12px;line-height:20px;padding-left:0px;white-space:nowrap;overflow:hidden;color:#232323;">flowforce@hostname</div>
<div style="position:absolute;left:265px;top:483px;width:500px;height:21px;box-sizing:border-box;border:1px solid #d9d9d9;border-radius:4px;background:#fff;font-size:12px;line-height:20px;padding-left:0px;white-space:nowrap;overflow:hidden;color:#232323;">an@beispiel.org</div>
<div style="position:absolute;left:265px;top:507px;width:500px;height:21px;box-sizing:border-box;border:1px solid #d9d9d9;border-radius:4px;background:#fff;font-size:12px;line-height:20px;padding-left:0px;white-space:nowrap;overflow:hidden;color:#232323;">Beispielmail</div>
<div style="position:absolute;left:265px;top:531px;width:500px;height:21px;box-sizing:border-box;border:1px solid #d9d9d9;border-radius:4px;background:#efeaf8;font-size:12px;line-height:20px;padding-left:0px;white-space:nowrap;overflow:hidden;color:#232323;color:#333;letter-spacing:-0.5px"><i>message</i></div>
<svg style="position:absolute;left:262px;top:555px" width="22" height="22" viewBox="0 0 22 22"><circle cx="10.6" cy="10.5" r="10" fill="#f7f7f7" stroke="#c4c4c4" stroke-width="1"/><rect x="7" y="10" width="8" height="2" fill="#2470c3"/><rect x="10" y="7" width="2" height="8" fill="#2470c3"/></svg>
<svg style="position:absolute;left:262px;top:579px" width="22" height="22" viewBox="0 0 22 22"><circle cx="10.6" cy="10.5" r="10" fill="#f7f7f7" stroke="#c4c4c4" stroke-width="1"/><rect x="7" y="10" width="8" height="2" fill="#2470c3"/><rect x="10" y="7" width="2" height="8" fill="#2470c3"/></svg>
<div style="position:absolute;left:33.5px;top:618px;font-size:12px;line-height:14px;white-space:nowrap;color:#232323">=</div>
<div style="position:absolute;left:63.5px;top:617px;font-size:12px;line-height:14px;white-space:nowrap;color:#232323;letter-spacing:-0.25px">Das Ergebnis dieses Schritts zuweisen an</div>
<div style="position:absolute;left:284px;top:613px;width:147px;height:20px;box-sizing:border-box;border:1px solid #d9d9d9;border-radius:4px;background:#fff;font-size:12px;line-height:20px;padding-left:0px;white-space:nowrap;overflow:hidden;color:#232323;color:#888">Name</div>
<div style="position:absolute;left:437px;top:617px;font-size:12px;line-height:14px;white-space:nowrap;color:#232323;letter-spacing:-0.15px">als Boolean</div>
</div></div></body></html>
